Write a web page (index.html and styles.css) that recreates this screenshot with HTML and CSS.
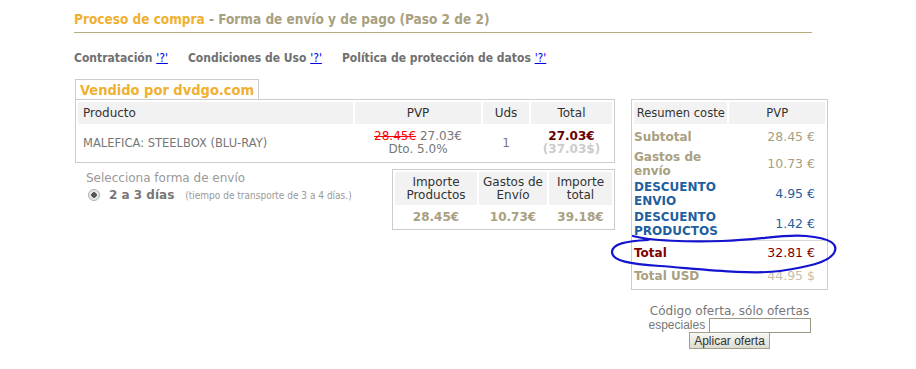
FILE: index.html
```html
<!DOCTYPE html>
<html lang="es">
<head>
  <meta charset="UTF-8" />
  <title>Proceso de compra - Paso 2 de 2</title>
  <link rel="stylesheet" href="styles.css">
</head>
<body>
  <div class="page">

    <!-- Step title -->
    <h1 class="step-title"><span class="accent">Proceso de compra</span> - Forma de envío y de pago (Paso 2 de 2)</h1>

    <div class="legal-links">
      <span>Contratación <a href="#">'?'</a></span>
      <span>Condiciones de Uso <a href="#">'?'</a></span>
      <span>Política de protección de datos <a href="#">'?'</a></span>
    </div>

    <div class="checkout">
      <!-- Left: order lines and shipping -->
      <div class="order-col">
        <div class="seller-tab">Vendido por dvdgo.com</div>
        <table class="products">
          <tr>
            <th class="col-product">Producto</th>
            <th class="col-pvp">PVP</th>
            <th class="col-uds">Uds</th>
            <th class="col-total">Total</th>
          </tr>
          <tr>
            <td class="product-name">MALEFICA: STEELBOX (BLU-RAY)</td>
            <td class="center"><span class="old-price">28.45€</span> 27.03€<br>Dto. 5.0%</td>
            <td class="center">1</td>
            <td class="center"><span class="line-total">27.03€</span><br><span class="line-usd">(37.03$)</span></td>
          </tr>
        </table>

        <div class="shipping-row">
          <div class="shipping">
            <div class="shipping-label">Selecciona forma de envío</div>
            <label class="shipping-option">
              <span class="radio"></span>
              <b>2 a 3 días</b>
              <small>(tiempo de transporte de 3 a 4 días.)</small>
            </label>
          </div>
          <table class="amounts">
            <tr>
              <th class="col-a">Importe<br>Productos</th>
              <th class="col-b">Gastos de<br>Envío</th>
              <th class="col-c">Importe<br>total</th>
            </tr>
            <tr>
              <td>28.45€</td>
              <td>10.73€</td>
              <td>39.18€</td>
            </tr>
          </table>
        </div>
      </div>

      <!-- Right: cost summary and offer code -->
      <div class="summary-col">
        <table class="summary">
          <tr>
            <th class="col-label">Resumen coste</th>
            <th class="col-value">PVP</th>
          </tr>
          <tr><td class="label">Subtotal</td><td class="value">28.45 €</td></tr>
          <tr><td class="label">Gastos de<br>envío</td><td class="value">10.73 €</td></tr>
          <tr class="discount"><td class="label">DESCUENTO<br>ENVIO</td><td class="value">4.95 €</td></tr>
          <tr class="discount"><td class="label">DESCUENTO<br>PRODUCTOS</td><td class="value">1.42 €</td></tr>
          <tr class="sep"><td colspan="2"><div class="sep-line"></div></td></tr>
          <tr class="grand"><td class="label">Total</td><td class="value">32.81 €</td></tr>
          <tr class="usd"><td class="label">Total USD</td><td class="value">44.95 $</td></tr>
        </table>

        <form class="offer">
          <div>Código oferta, sólo ofertas</div>
          <div class="offer-line">especiales <input type="text" class="offer-input"></div>
          <button type="button" class="offer-btn">Aplicar oferta</button>
        </form>
      </div>
    </div>

    <!-- hand drawn mark around the total -->
    <svg class="scribble" width="916" height="369" viewBox="0 0 916 369">
      <path d="M633,236 C650,241 690,242 722,241 C760,240 782,234 806,236 C830,238 839,244 834,253 C828,263 806,267 780,271 C750,275 700,269 660,266 C630,264 612,261 612,252 C612,244 626,241 648,240" fill="none" stroke="#1414d0" stroke-width="2.2" stroke-linecap="round"/>
    </svg>
  </div>
</body>
</html>
```

FILE: styles.css
```css
* {
  box-sizing: border-box;
}

html, body {
  margin: 0;
  padding: 0;
  background: #ffffff;
  font-family: "DejaVu Sans", Verdana, sans-serif;
  font-size: 12px;
  color: #777777;
}

.page {
  position: relative;
  width: 916px;
  height: 369px;
  padding: 9px 0 0 74px;
}

/* Title */
.step-title {
  margin: 0;
  width: 738px;
  padding: 2px 0 5px;
  border-bottom: 1px solid #b8aa80;
  font-family: "DejaVu Sans Condensed", "DejaVu Sans", sans-serif;
  font-stretch: condensed;
  font-size: 13.5px;
  font-weight: bold;
  color: #a8a080;
  line-height: 16px;
}

.step-title .accent {
  color: #f0b030;
}

.legal-links {
  display: flex;
  gap: 20px;
  margin-top: 18px;
  font-family: "DejaVu Sans Condensed", "DejaVu Sans", sans-serif;
  font-stretch: condensed;
  font-size: 12px;
  font-weight: bold;
  color: #707070;
  line-height: 14px;
}

.legal-links a {
  font-weight: normal;
  color: #0000ee;
}

/* Main area */
.checkout {
  display: flex;
  gap: 16px;
  margin-top: 14px;
}

.order-col {
  width: 540px;
  margin-left: 1px;
}

.seller-tab {
  display: inline-block;
  border: 1px solid #cccccc;
  border-bottom: none;
  padding: 1px 4px 0 4px;
  height: 20px;
  font-family: "DejaVu Sans Condensed", "DejaVu Sans", sans-serif;
  font-stretch: condensed;
  font-size: 14.5px;
  font-weight: bold;
  color: #f0b030;
  line-height: 18px;
}

table {
  border: 1px solid #cccccc;
  border-spacing: 2px;
  font-size: 12px;
}

th {
  background: #f2f2f2;
  font-weight: normal;
  color: #333333;
  padding: 0 5px;
  white-space: nowrap;
}

td {
  padding: 0 5px;
}

.products {
  width: 540px;
}

.products th {
  height: 22px;
  text-align: center;
}

.products th.col-product {
  width: 275px;
  text-align: left;
}

.products .col-pvp { width: 126px; }
.products .col-uds { width: 46px; }
.products .col-total { width: 81px; }

.products td {
  height: 34px;
  line-height: 13px;
}

.products td.product-name {
  font-size: 11.5px;
}

.center {
  text-align: center;
}

.old-price {
  color: #ff0000;
  text-decoration: line-through;
}

.line-total {
  font-weight: bold;
  color: #660000;
}

.line-usd {
  font-weight: bold;
  color: #cccccc;
}

.shipping-row {
  display: flex;
  justify-content: space-between;
  margin-top: 6px;
}

.shipping {
  padding: 2px 0 0 11px;
}

.shipping-label {
  color: #999999;
  line-height: 15px;
}

.shipping-option {
  display: flex;
  align-items: center;
  gap: 9px;
  margin-top: 2px;
  padding-left: 2px;
}

.shipping-option b {
  color: #777777;
  font-size: 12px;
}

.shipping-option small {
  font-family: "DejaVu Sans Condensed", "DejaVu Sans", sans-serif;
  font-stretch: condensed;
  font-size: 10px;
  color: #999999;
  margin-left: 2px;
}

.radio {
  width: 12px;
  height: 12px;
  border-radius: 50%;
  border: 1px solid #b0b0b0;
  background: radial-gradient(circle, #555555 0 2.5px, #e8e8e8 3px);
}

.amounts {
  width: 223px;
}

.amounts th {
  height: 33px;
  line-height: 13px;
  text-align: center;
  padding: 0 1px;
}

.amounts .col-a { width: 82px; }
.amounts .col-b { width: 68px; }
.amounts .col-c { width: 63px; }

.amounts td {
  height: 20px;
  text-align: center;
  font-weight: bold;
  color: #a8a080;
  padding: 0 1px;
}

/* Summary */
.summary-col {
  width: 197px;
  margin-top: 20px;
}

.summary {
  width: 197px;
}

.summary th {
  height: 22px;
  padding: 0 2px;
  font-size: 11.5px;
}

.summary .col-label { width: 93px; }
.summary .col-value { width: 95px; }

.summary td {
  height: 22px;
  line-height: 14px;
  padding: 0;
  font-weight: bold;
  color: #a8a080;
  white-space: nowrap;
}

.summary td.value {
  text-align: right;
  font-weight: normal;
  color: #a8a080;
  padding-right: 10px;
  font-size: 12.5px;
}

.summary .discount td {
  color: #1f5f9f;
}

.summary .sep td {
  height: 1px;
  padding: 0;
}

.sep-line {
  height: 1px;
  background: #d8d8d8;
}

.summary .grand td {
  height: 20px;
  color: #800000;
}

.summary .usd td.value {
  color: #c8c0a8;
}

.offer {
  margin-top: 14px;
  text-align: center;
  color: #777777;
  line-height: 14px;
}

.offer-line {
  font-family: "Liberation Sans", Arial, sans-serif;
  font-size: 12px;
  line-height: 15px;
}

.offer-input {
  width: 102px;
  height: 15px;
  border: 1px solid #999980;
  padding: 0;
  vertical-align: middle;
}

.offer-btn {
  margin-top: -1px;
  height: 17px;
  padding: 0 4px;
  border: 1px solid #a0a090;
  background: linear-gradient(#f8f8f4, #dcdcd0);
  font-family: "Liberation Sans", Arial, sans-serif;
  font-size: 12px;
  color: #333333;
  line-height: 14px;
}

/* hand drawn mark */
.scribble {
  position: absolute;
  top: 0;
  left: 0;
  pointer-events: none;
}
```
